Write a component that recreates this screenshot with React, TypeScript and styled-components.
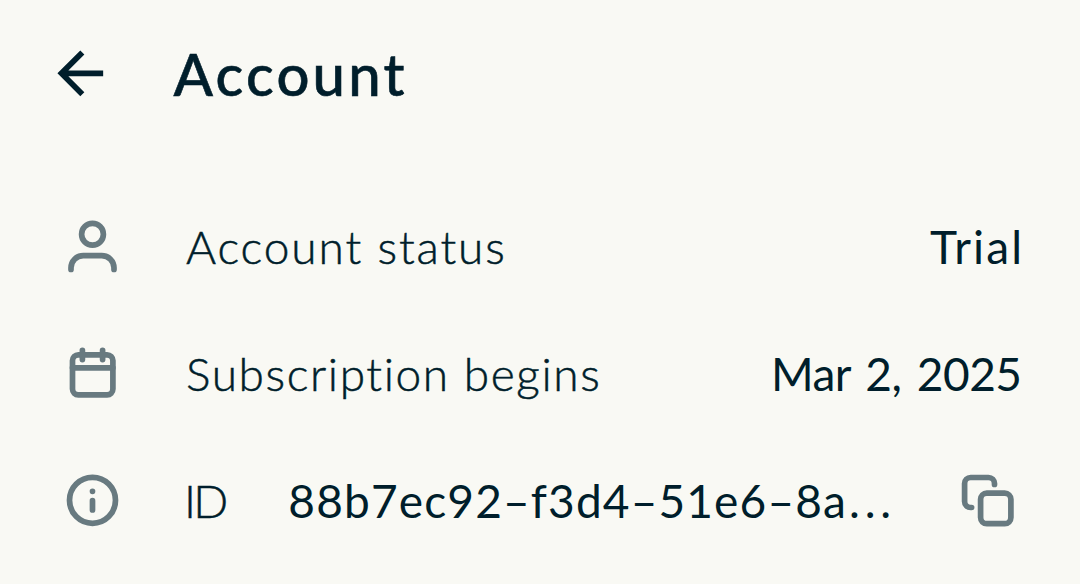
import { MdArrowBack } from 'react-icons/md'
import styled, { createGlobalStyle } from 'styled-components'

const UserIcon = () => (
  <Icon viewBox="0 0 60 60">
    <circle cx="30.5" cy="17.3" r="10.9" />
    <path d="M9 52.4v-1.6a12.2 12.2 0 0 1 12.2-12.2h18.6A12.2 12.2 0 0 1 52 50.8v1.6" />
  </Icon>
)

const CalendarIcon = () => (
  <Icon viewBox="0 0 60 60">
    <rect x="10.5" y="10.8" width="40.4" height="40.1" rx="5.8" />
    <path d="M10.5 23.8h40.4M20.4 6.4v9.2M40.6 6.4v9.2" />
  </Icon>
)

const InfoIcon = () => (
  <Icon viewBox="0 0 60 60">
    <circle cx="30.5" cy="29.3" r="23" />
    <path d="M30.5 20.3v.01M30.5 29.7v9.2" />
  </Icon>
)

const CopyIcon = () => (
  <Icon viewBox="0 0 60 60">
    <rect x="22.6" y="22.1" width="30.3" height="30.6" rx="6.2" />
    <path d="M36.5 13.5v-1a6 6 0 0 0-6-6H12.6a6 6 0 0 0-6 6v18a6 6 0 0 0 6 6h1" />
  </Icon>
)

const App: React.FC = () => {
  return (
    <Screen>
      <GlobalStyle />
      <Header>
        <BackButton aria-label="Back">
          <MdArrowBack size={68.6} />
        </BackButton>
        <Title>Account</Title>
      </Header>
      <List>
        <Row>
          <UserIcon />
          <Label $spacing={1.9}>Account status</Label>
          <Value $spacing={2.1}>Trial</Value>
        </Row>
        <Row>
          <CalendarIcon />
          <Label $spacing={1.6}>Subscription begins</Label>
          <DateValue $spacing={-0.5}>Mar 2, 2025</DateValue>
        </Row>
        <Row>
          <InfoIcon />
          <IdLabel $spacing={-2.8}>ID</IdLabel>
          <AccountId $spacing={1.15}>
            88b7ec92–f3d4–51e6–8a<Dots>...</Dots>
          </AccountId>
          <CopyButton aria-label="Copy ID">
            <CopyIcon />
          </CopyButton>
        </Row>
      </List>
    </Screen>
  )
}

export default App

const GlobalStyle = createGlobalStyle`
  body {
    margin: 0;
    background: #f9f9f4;
  }
`
const Screen = styled.main`
  box-sizing: border-box;
  width: 1080px;
  height: 584px;
  overflow: hidden;
  background: #f9f9f4;
  color: #001e2b;
  font-family: Lato, sans-serif;
`
const Header = styled.header`
  display: flex;
  align-items: center;
  height: 147px;
  padding-left: 46px;
`
const BackButton = styled.button`
  display: flex;
  padding: 0;
  border: 0;
  background: none;
  color: inherit;
`
const Title = styled.h1`
  margin: 0 0 0 59px;
  font-size: 58px;
  font-weight: 500;
  line-height: 70px;
  letter-spacing: 3.2px;
  -webkit-text-stroke: 0.6px currentColor;
`
const List = styled.div`
  padding: 36px 58px 0 62px;
`
const Row = styled.div`
  display: flex;
  align-items: center;
  height: 127px;
`
const Icon = styled.svg`
  flex: none;
  width: 60px;
  height: 60px;
  fill: none;
  stroke: #687a80;
  stroke-width: 5.7;
  stroke-linecap: round;
  stroke-linejoin: round;
`
const Label = styled.span<{ $spacing: number }>`
  margin-left: 64px;
  font-size: 46px;
  font-weight: 300;
  white-space: nowrap;
  letter-spacing: ${(props) => props.$spacing}px;
  -webkit-text-stroke: 0.5px currentColor;
`
const IdLabel = styled(Label)`
  margin-left: 62px;
`
const Value = styled.span<{ $spacing: number }>`
  margin-left: auto;
  margin-right: ${(props) => -props.$spacing}px;
  font-size: 46px;
  font-weight: 400;
  white-space: nowrap;
  letter-spacing: ${(props) => props.$spacing}px;
`
const DateValue = styled(Value)`
  word-spacing: 4px;
`
const AccountId = styled(Value)`
  margin-left: 63px;
`
const Dots = styled.span`
  margin-left: 2px;
  letter-spacing: 4.8px;
`
const CopyButton = styled.button`
  display: flex;
  margin-left: auto;
  margin-right: 4px;
  padding: 0;
  border: 0;
  background: none;
`
